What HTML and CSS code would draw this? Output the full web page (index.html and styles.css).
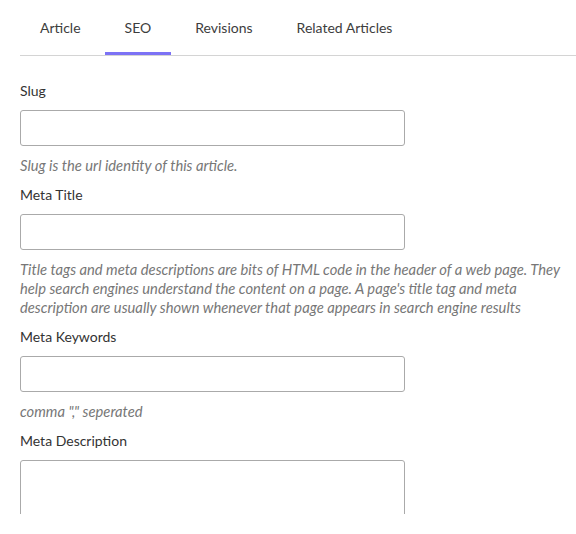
FILE: index.html
```html
<!DOCTYPE html>
<html>
<head>
<meta charset="utf-8">
<link rel="stylesheet" href="styles.css">
</head>
<body>
<div class="page">
  <nav class="tabs">
    <a class="tab">Article</a>
    <a class="tab active">SEO</a>
    <a class="tab">Revisions</a>
    <a class="tab">Related Articles</a>
  </nav>
  <form class="form">
    <div class="field">
      <label class="label">Slug</label>
      <input class="input" type="text">
      <p class="help">Slug is the url identity of this article.</p>
    </div>
    <div class="field">
      <label class="label">Meta Title</label>
      <input class="input" type="text">
      <p class="help">Title tags and meta descriptions are bits of HTML code in the header of a web page. They help search engines understand the content on a page. A page's title tag and meta description are usually shown whenever that page appears in search engine results</p>
    </div>
    <div class="field">
      <label class="label">Meta Keywords</label>
      <input class="input" type="text">
      <p class="help">comma "," seperated</p>
    </div>
    <div class="field">
      <label class="label">Meta Description</label>
      <textarea class="textarea"></textarea>
    </div>
  </form>
</div>
</body>
</html>
```
FILE: styles.css
```css
html, body {
  margin: 0;
  padding: 0;
  background: #fff;
}
body {
  font-family: Lato, "Liberation Sans", sans-serif;
  color: #333;
}
.page {
  height: 514px;
  overflow: hidden;
  padding-left: 20px;
}
.tabs {
  display: flex;
  gap: 4px;
  border-bottom: 1px solid #d4d4d4;
}
.tab {
  display: block;
  padding: 18px 20px 14px;
  line-height: 20px;
  font-size: 14px;
  color: #3d3d3d;
  border-bottom: 3px solid transparent;
}
.tab.active {
  border-bottom-color: #7c72f5;
}
.form {
  padding-top: 25px;
  width: 385px;
}
.field {
  margin-bottom: 10px;
}
.label {
  display: block;
  font-size: 14px;
  line-height: 20px;
  color: #333;
  margin-bottom: 9px;
}
.input, .textarea {
  display: block;
  box-sizing: border-box;
  width: 385px;
  height: 36px;
  border: 1px solid #aaa;
  border-radius: 3px;
  margin: 0;
  padding: 6px 10px;
  font: inherit;
  background: #fff;
}
.textarea {
  height: 90px;
  resize: none;
}
.help {
  margin: 10px 0 0;
  width: 545px;
  font-size: 14.75px;
  line-height: 19px;
  font-style: italic;
  color: #777;
}
```
